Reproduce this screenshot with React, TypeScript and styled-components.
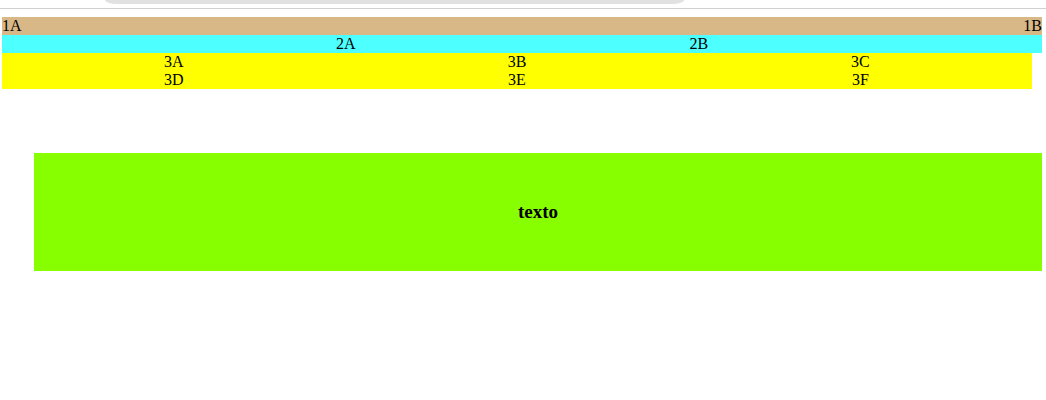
import React from "react";
import styled, { createGlobalStyle } from "styled-components";

const GlobalStyle = createGlobalStyle`
  html, body {
    margin: 0;
    padding: 0;
    background: #ffffff;
  }
  body {
    font-family: "Liberation Serif", "Times New Roman", serif;
    font-size: 16px;
    line-height: 18px;
    color: #000;
  }
`;

const Page = styled.div`
  display: flex;
  flex-direction: column;
`;

const TopBar = styled.div`
  height: 8px;
  border-bottom: 1px solid #d0d0d0;
  display: flex;
  align-items: flex-start;
`;

const Thumb = styled.div`
  margin-left: 105px;
  width: 579px;
  height: 4px;
  background: #e1e1e1;
  border-radius: 0 0 12px 12px / 0 0 4px 4px;
`;

const Content = styled.div`
  padding: 8px 4px 0 2px;
  display: flex;
  flex-direction: column;
`;

const RowSplit = styled.div`
  display: flex;
  justify-content: space-between;
  background: #d9b888;
  height: 18px;
`;

const RowEven = styled.div`
  display: flex;
  justify-content: space-evenly;
  background: #4dffff;
  height: 18px;
`;

const Grid = styled.div`
  display: grid;
  grid-template-columns: repeat(3, 1fr);
  grid-auto-rows: 18px;
  background: #ffff00;
  margin-right: 10px;
  text-align: center;
`;

const Banner = styled.div`
  margin: 64px 0 0 32px;
  height: 118px;
  background: #88ff00;
  display: flex;
  align-items: center;
  justify-content: center;
  font-weight: bold;
  font-size: 19px;
  line-height: 22px;
  padding-bottom: 1px;
  box-sizing: border-box;
`;

export default function App() {
  return (
    <Page>
      <GlobalStyle />
      <TopBar>
        <Thumb />
      </TopBar>
      <Content>
        <RowSplit>
          <span>1A</span>
          <span>1B</span>
        </RowSplit>
        <RowEven>
          <span>2A</span>
          <span>2B</span>
        </RowEven>
        <Grid>
          {["3A", "3B", "3C", "3D", "3E", "3F"].map((t) => (
            <span key={t}>{t}</span>
          ))}
        </Grid>
        <Banner>texto</Banner>
      </Content>
    </Page>
  );
}
